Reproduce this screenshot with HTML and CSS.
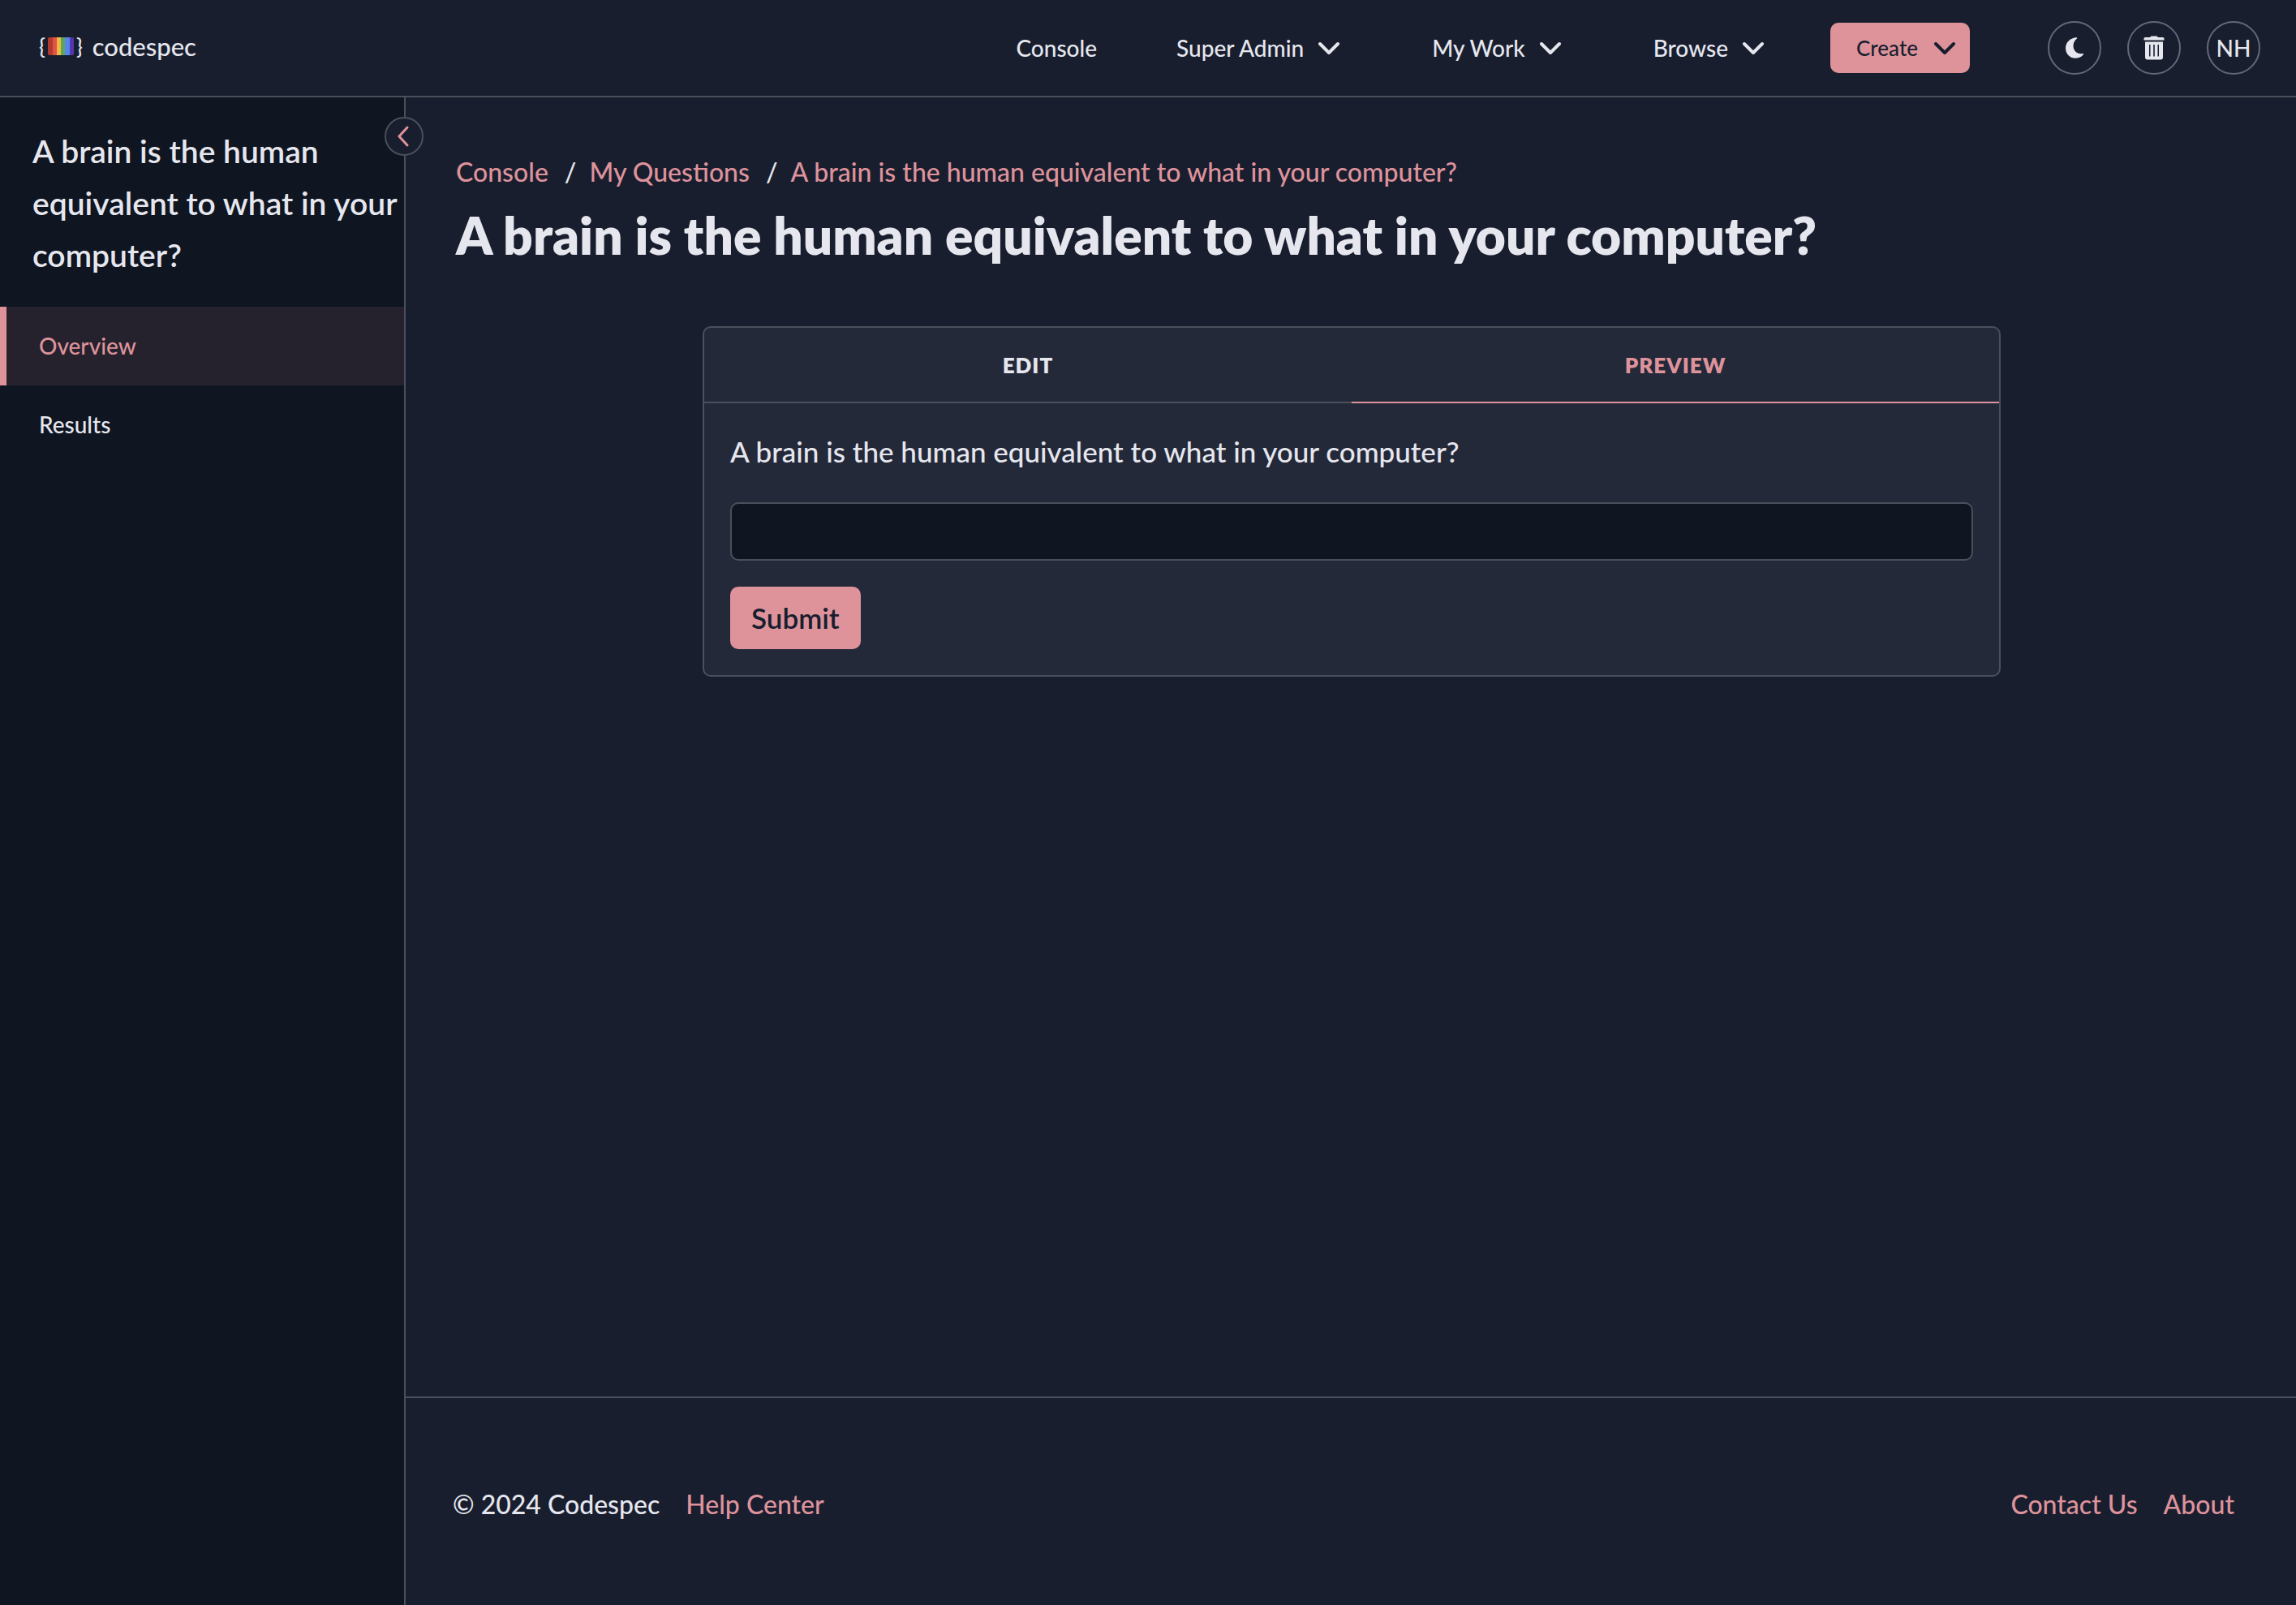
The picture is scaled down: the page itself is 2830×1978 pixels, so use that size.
FILE: index.html
```html
<!DOCTYPE html>
<html lang="en">
<head>
  <meta charset="utf-8">
  <meta name="viewport" content="width=device-width, initial-scale=1">
  <title>A brain is the human equivalent to what in your computer? | Codespec</title>
  <link rel="stylesheet" href="styles.css">
</head>
<body>
  <header class="topbar">
    <a class="brand" href="#">
      <span class="brand-mark">
        <span>{</span>
        <svg class="brand-bars" viewBox="0 0 32 22" aria-hidden="true">
          <clipPath id="bars"><rect width="32" height="22" rx="2"/></clipPath>
          <g clip-path="url(#bars)">
            <rect width="6" height="22" fill="#b23a2e"/>
            <rect x="6" width="5" height="22" fill="#dc5548"/>
            <rect x="11" width="5" height="22" fill="#f2b93f"/>
            <rect x="16" width="5" height="22" fill="#5ba55f"/>
            <rect x="21" width="6" height="22" fill="#5684ee"/>
            <rect x="27" width="5" height="22" fill="#5636ad"/>
          </g>
        </svg>
        <span>}</span>
      </span>
      <span>codespec</span>
    </a>
    <nav class="menu" aria-label="Main">
      <a class="menu-item" href="#">Console</a>
      <button class="menu-item" type="button">Super Admin
        <svg class="chevron" viewBox="0 0 26 16" aria-hidden="true"><path d="M2 3l11 11L24 3"/></svg>
      </button>
      <button class="menu-item" type="button">My Work
        <svg class="chevron" viewBox="0 0 26 16" aria-hidden="true"><path d="M2 3l11 11L24 3"/></svg>
      </button>
      <button class="menu-item" type="button">Browse
        <svg class="chevron" viewBox="0 0 26 16" aria-hidden="true"><path d="M2 3l11 11L24 3"/></svg>
      </button>
      <button class="create" type="button">Create
        <svg class="chevron" viewBox="0 0 26 16" aria-hidden="true"><path d="M2 3l11 11L24 3"/></svg>
      </button>
    </nav>
    <div class="tools">
      <button class="round" type="button" aria-label="Dark theme">
        <svg width="24" height="28" viewBox="0 0 24 28" aria-hidden="true"><path fill="currentColor" d="M14.500 1.200C7 1.500 1 7 1 14.200C1 21.400 6.500 26.800 13.500 26.800C17.500 26.800 21 25 23 22.100C23.400 21.500 22.900 20.900 22.200 21C15.500 22 10.500 18 10.500 11.500C10.500 7.800 12.200 4.600 15 2.500C15.600 2 15.300 1.200 14.500 1.200Z"/></svg>
      </button>
      <button class="round" type="button" aria-label="Trash">
        <svg width="26" height="30" viewBox="0 0 26 30" aria-hidden="true">
          <path fill="currentColor" d="M2 2H8L9.500 0.500H16.500L18 2H24Q25.500 2 25.500 3.500V5.500H0.500V3.500Q0.500 2 2 2Z"/>
          <path fill="currentColor" fill-rule="evenodd" d="M2 7.500H24V26.500Q24 29.500 21 29.500H5Q2 29.500 2 26.500ZM7 11V25.500H8.500V11ZM12.200 11V25.500H13.800V11ZM17.500 11V25.500H19V11Z"/>
        </svg>
      </button>
      <button class="round" type="button" aria-label="Account NH">NH</button>
    </div>
  </header>

  <div class="shell">
    <aside class="sidebar">
      <button class="collapse" type="button" aria-label="Collapse sidebar">
        <svg width="14" height="26" viewBox="0 0 14 26" aria-hidden="true"><path d="M12 2L2 13l10 11"/></svg>
      </button>
      <h2 class="sidebar-title">A brain is the human equivalent to what in your computer?</h2>
      <nav class="side-links" aria-label="Question">
        <a class="side-link is-active" href="#" aria-current="page">Overview</a>
        <a class="side-link" href="#">Results</a>
      </nav>
    </aside>

    <div class="page">
      <main class="content">
        <nav aria-label="Breadcrumb">
          <ol class="crumbs">
            <li><a href="#">Console</a></li>
            <li><a href="#">My Questions</a></li>
            <li><a href="#">A brain is the human equivalent to what in your computer?</a></li>
          </ol>
        </nav>
        <h1 class="title">A brain is the human equivalent to what in your computer?</h1>

        <section class="card">
          <div class="tabs" role="tablist">
            <button class="tab" type="button" role="tab" aria-selected="false">EDIT</button>
            <button class="tab is-active" type="button" role="tab" aria-selected="true">PREVIEW</button>
          </div>
          <form class="question">
            <label for="answer">A brain is the human equivalent to what in your computer?</label>
            <input class="answer" id="answer" type="text">
            <button class="submit" type="button">Submit</button>
          </form>
        </section>
      </main>

      <footer class="footer">
        <div class="footer-group">
          <span>© 2024 Codespec</span>
          <a href="#">Help Center</a>
        </div>
        <div class="footer-group">
          <a href="#">Contact Us</a>
          <a href="#">About</a>
        </div>
      </footer>
    </div>
  </div>
</body>
</html>
```
FILE: styles.css
```css
:root {
  --bg: #191e2f;
  --bg-deep: #0f1521;
  --bg-card: #24293a;
  --line: #4b4f5c;
  --text: #e6e7ee;
  --accent: #de939b;
}

* {
  box-sizing: border-box;
}

body {
  margin: 0;
  min-height: 100vh;
  display: flex;
  flex-direction: column;
  background: var(--bg);
  color: var(--text);
  font-family: Lato, "Liberation Sans", sans-serif;
  font-size: 32px;
  font-weight: 500;
  line-height: 48px;
}

a {
  color: var(--accent);
  text-decoration: none;
}

button,
input {
  margin: 0;
  padding: 0;
  border: 0;
  background: none;
  color: inherit;
  font: inherit;
}

svg {
  display: block;
  flex: none;
}

/* Top bar */
.topbar {
  display: flex;
  align-items: center;
  height: 120px;
  padding: 0 44px 0 48px;
  border-bottom: 2px solid var(--line);
  font-size: 28px;
}

.brand {
  display: flex;
  align-items: center;
  gap: 12px;
  margin-right: auto;
  padding-bottom: 4px;
  color: var(--text);
  font-size: 31px;
}

.brand-mark {
  display: flex;
  align-items: center;
  gap: 3px;
  font-size: 26px;
}

.brand-bars {
  width: 32px;
  height: 22px;
}

.menu {
  display: flex;
  align-items: center;
}

.menu-item {
  display: flex;
  align-items: center;
  gap: 18px;
  margin-right: 114px;
  color: var(--text);
}

a.menu-item {
  margin-right: 98px;
}

.menu-item:nth-child(4) {
  margin-right: 82px;
}

.chevron {
  width: 26px;
  height: 16px;
}

.chevron path,
.collapse path {
  fill: none;
  stroke: currentColor;
  stroke-width: 4;
  stroke-linecap: round;
  stroke-linejoin: round;
}

.collapse path {
  stroke-width: 3;
}

.create {
  display: flex;
  align-items: center;
  justify-content: space-between;
  width: 172px;
  height: 62px;
  padding: 0 18px 0 32px;
  border-radius: 10px;
  background: var(--accent);
  color: var(--bg);
  font-size: 26px;
}

.tools {
  display: flex;
  gap: 32px;
  margin-left: 96px;
}

.round {
  display: flex;
  align-items: center;
  justify-content: center;
  width: 66px;
  height: 66px;
  border: 2px solid #62677a;
  border-radius: 50%;
}

/* Sidebar */
.shell {
  flex: 1;
  display: flex;
}

.sidebar {
  position: relative;
  flex: none;
  width: 500px;
  border-right: 2px solid var(--line);
  background: var(--bg-deep);
}

.collapse {
  position: absolute;
  top: 24px;
  right: -24px;
  display: flex;
  align-items: center;
  justify-content: center;
  width: 48px;
  height: 48px;
  padding-right: 3px;
  border: 2px solid var(--line);
  border-radius: 50%;
  background: var(--bg);
  color: var(--accent);
}

.sidebar-title {
  margin: 0;
  padding: 34px 0 32px 40px;
  font-size: 39px;
  font-weight: 600;
  line-height: 64px;
}

.side-link {
  display: block;
  padding: 24px 40px 25px;
  border-left: 8px solid transparent;
  color: var(--text);
  font-size: 28px;
}

.side-link.is-active {
  border-left-color: var(--accent);
  background: #25222d;
  color: var(--accent);
}

/* Page */
.page {
  flex: 1;
  display: flex;
  flex-direction: column;
}

.content {
  flex: 1;
  padding: 68px 60px 68px 62px;
}

.crumbs {
  display: flex;
  margin: 0;
  padding: 0;
  list-style: none;
}

.crumbs li + li::before {
  content: "/";
  padding: 0 16px 0 20px;
}

.title {
  margin: 6px 0 64px;
  font-size: 64px;
  font-weight: 800;
  line-height: 96px;
}

.card {
  max-width: 1600px;
  margin: 0 auto;
  border: 2px solid var(--line);
  border-radius: 10px;
  background: var(--bg-card);
}

.tabs {
  display: flex;
}

.tab {
  flex: 1;
  padding: 22px 0 21px;
  border-bottom: 2px solid var(--line);
  font-size: 26px;
  font-weight: 800;
  letter-spacing: 1px;
}

.tab.is-active {
  border-bottom-color: var(--accent);
  color: var(--accent);
}

.question {
  display: flex;
  flex-direction: column;
  align-items: flex-start;
  gap: 32px;
  padding: 32px;
  font-size: 35px;
}

.question label {
  padding-bottom: 4px;
  line-height: 54px;
}

.answer {
  width: 100%;
  height: 72px;
  padding: 0 16px;
  border: 2px solid var(--line);
  border-radius: 10px;
  background: var(--bg-deep);
}

.submit {
  height: 77px;
  padding: 0 26px 2px;
  border-radius: 10px;
  background: var(--accent);
  color: var(--bg);
  font-weight: 600;
}

/* Footer */
.footer {
  display: flex;
  justify-content: space-between;
  padding: 107px 76px 100px 58px;
  border-top: 2px solid var(--line);
}

.footer-group {
  display: flex;
  gap: 32px;
}
```
